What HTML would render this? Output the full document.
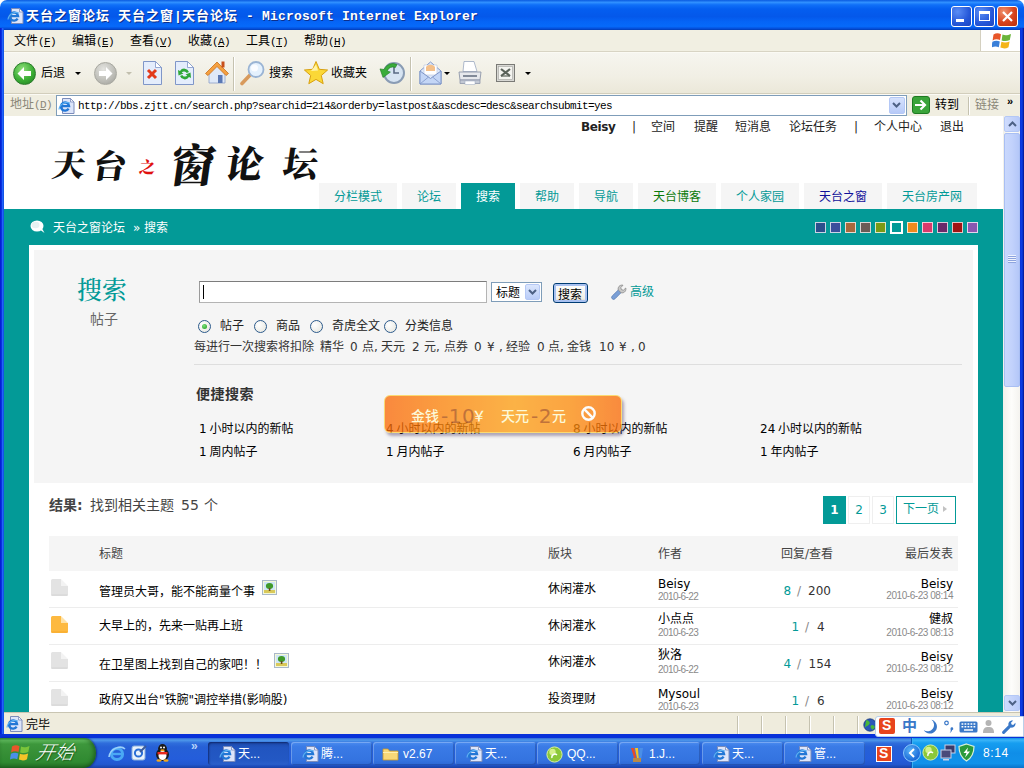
<!DOCTYPE html>
<html lang="zh-CN">
<head>
<meta charset="utf-8">
<title>天台之窗论坛 天台之窗|天台论坛 - Microsoft Internet Explorer</title>
<style>
*{box-sizing:border-box;margin:0;padding:0}
html,body{width:1024px;height:768px;overflow:hidden;background:#fff}
body{font-family:"Liberation Sans","Noto Sans CJK SC",sans-serif;font-size:12px;color:#000}
.abs,#win div,#win span,#win svg,#win i,#win b{position:absolute}
#win{position:relative;width:1024px;height:768px;overflow:hidden;background:#3f7f6f}
#win span.t{white-space:nowrap;line-height:1}
/* ---------- window chrome ---------- */
.ui{font-family:"Liberation Sans","Noto Sans CJK SC",sans-serif;font-size:12px;line-height:16px;height:16px;white-space:nowrap;color:#000}
.mono{font-family:"Liberation Mono","Noto Sans CJK SC",monospace}
#titlebar{left:0;top:0;width:1024px;height:30px;border-radius:7px 7px 0 0;background:linear-gradient(#0a5ae0 0,#3090ff 8%,#1070f8 16%,#045ef0 30%,#0458ea 55%,#0564f6 72%,#066afa 88%,#0450dc 95%,#023cb4 100%)}
#titlebar .tt{left:26px;top:9px;font-size:13px;font-weight:bold;color:#fff;letter-spacing:.2px;text-shadow:1px 1px 0 #0c2f8c;font-family:"Liberation Mono","Noto Sans CJK SC",monospace}
#titlebar .tt i{position:static;font-style:normal;letter-spacing:1px}
.wb{top:6px;width:21px;height:21px;border:1px solid #fff;border-radius:3px;background:radial-gradient(circle at 30% 25%,#5a8df5,#2557d8 60%,#1c45c0)}
#menubar{left:4px;top:30px;width:1016px;height:22px;background:#f1efe2;border-bottom:1px solid #d8d4c4}
#toolbar{left:4px;top:52px;width:1016px;height:42px;background:linear-gradient(#f6f5ef,#f1efe4 60%,#ebe8d9);border-top:1px solid #fbfaf4;border-bottom:1px solid #d2cebc}
#addrbar{left:4px;top:94px;width:1016px;height:22px;background:#f0eee1;border-top:1px solid #fbfaf4}
#lborder{left:0;top:28px;width:4px;height:740px;background:linear-gradient(90deg,#0019cf 0,#0a34e0 40%,#2466ff 65%,#0a4cd8 100%)}
#rborder{left:1020px;top:28px;width:4px;height:740px;background:linear-gradient(90deg,#0831d9,#0a3ee6 50%,#00138c)}
#status{left:4px;top:712px;width:1016px;height:22px;background:#efecdd;border-top:1px solid #c9c5b2}
#bborder{left:0;top:734px;width:1024px;height:4px;background:#0831d9}
#taskbar{left:0;top:738px;width:1024px;height:30px;background:linear-gradient(#3168d5 0,#4e98ea 7%,#2f6ddc 17%,#2660d6 30%,#245ddb 70%,#2258cf 88%,#1941a5 100%)}
#vscroll{left:1003px;top:116px;width:17px;height:596px;background:linear-gradient(90deg,#f1f0ea,#fdfdfb 50%,#f4f3ef)}
.sbtn{left:1px;width:16px;height:16px;border:1px solid #b4c8f6;border-radius:2px;background:linear-gradient(90deg,#cfdcfd,#b9cbf9)}
.sep{width:1px;background:#c5c2b0;border-right:1px solid #fff;box-sizing:content-box}
.tk{top:4px;height:23px;border-radius:3px;background:linear-gradient(#4b8cf0,#3a7be6 20%,#3473e0 80%,#2c67d4);box-shadow:inset 1px 1px 0 rgba(255,255,255,.25),inset -1px -1px 0 rgba(0,0,40,.2)}
.tk .ui{color:#fff;left:27px;top:4px;font-size:12px}
/* ---------- page ---------- */
#page{left:0;top:0;width:1024px;height:768px;overflow:hidden;background:#fff}
#page .t{margin-top:3px;font-family:"DejaVu Sans","Liberation Sans","Noto Sans CJK SC",sans-serif;font-size:12px;line-height:16px;height:16px;white-space:nowrap;color:#000}
#page .t.r{text-align:right}
#page .t.dt.r{letter-spacing:-.45px}
#page .t.c{text-align:center}
#teal{left:4px;top:209px;width:999px;height:520px;background:#039a97}
#box{left:29px;top:245px;width:949px;height:480px;background:#fff}
#sbox{left:5px;top:5px;width:939px;height:233px;background:#f5f5f5}
.tab{top:183px;height:26px;background:#f5f5f5;color:#039a97;font-size:12px;line-height:28px;text-align:center;white-space:nowrap;font-family:"Liberation Sans","Noto Sans CJK SC",sans-serif}
.tab.on{background:#039a97;color:#fff;height:27px}
.sw{top:222px;width:11px;height:11px;border:1px solid rgba(255,255,255,.75)}
.teal{color:#039a97 !important}
.g4{color:#444 !important}
.g6{color:#666 !important}
.dt{font-family:"Liberation Sans",sans-serif !important;font-size:10px !important;letter-spacing:-.6px;color:#8a8a8a !important}
.hl{height:1px;background:#ededed;left:49px;width:909px}
.pg{top:496px;height:28px;line-height:26px;text-align:center;font-size:12px;font-family:"DejaVu Sans","Liberation Sans","Noto Sans CJK SC",sans-serif;color:#039a97;border:1px solid #efefef;background:#fff}
</style>
</head>
<body>
<div id="win">
  <div id="page">
    <span class="t " style="color:#222;top:117.5px;left:581px;"><b style="position:static;letter-spacing:-.4px">Beisy</b></span>
    <span class="t " style="color:#222;top:117.5px;left:632px;">|</span>
    <span class="t " style="color:#222;top:117.5px;left:651px;">空间</span>
    <span class="t " style="color:#222;top:117.5px;left:694px;">提醒</span>
    <span class="t " style="color:#222;top:117.5px;left:735px;">短消息</span>
    <span class="t " style="color:#222;top:117.5px;left:789px;">论坛任务</span>
    <span class="t " style="color:#222;top:117.5px;left:854px;">|</span>
    <span class="t " style="color:#222;top:117.5px;left:874px;">个人中心</span>
    <span class="t " style="color:#222;top:117.5px;left:940px;">退出</span>
    <svg id="logo" style="left:44px;top:134px" width="290" height="60" viewBox="0 0 290 60">
      <g font-family="'Noto Serif CJK SC','Liberation Serif',serif" font-weight="900" fill="#111" transform="skewX(-8)">
        <text x="13" y="42" font-size="33">天</text>
        <text x="54" y="44" font-size="33">台</text>
        <text x="100" y="39" font-size="16" fill="#e01010">之</text>
        <text x="131" y="48" font-size="45">窗</text>
        <text x="186" y="44" font-size="38">论</text>
        <text x="243" y="43" font-size="35">坛</text>
      </g>
    </svg>
    <div class="tab" style="left:319px;width:78px;">分栏模式</div>
    <div class="tab" style="left:402px;width:54px;">论坛</div>
    <div class="tab on" style="left:461px;width:54px;">搜索</div>
    <div class="tab" style="left:520px;width:54px;">帮助</div>
    <div class="tab" style="left:579px;width:54px;">导航</div>
    <div class="tab" style="left:638px;width:78px;color:#0a7a0a">天台博客</div>
    <div class="tab" style="left:721px;width:78px;">个人家园</div>
    <div class="tab" style="left:804px;width:78px;color:#10109a">天台之窗</div>
    <div class="tab" style="left:887px;width:90px;">天台房产网</div>
    <div id="teal"></div>
    <svg style="left:29px;top:218px" width="18" height="17" viewBox="0 0 18 17"><ellipse cx="8" cy="8" rx="6.5" ry="5.5" fill="#fff"/><path d="M10 11 L15.5 15 L12.5 9.5Z" fill="#fff"/><ellipse cx="6.5" cy="7" rx="4" ry="3.2" fill="#e6f2f2"/></svg>
    <span class="t " style="top:218.5px;left:53px;color:#fff;">天台之窗论坛</span>
    <span class="t " style="top:218.5px;left:133px;color:#fff;">»</span>
    <span class="t " style="top:218.5px;left:144px;color:#fff;">搜索</span>
    <div class="sw" style="left:815px;background:#2b4f8c"></div>
    <div class="sw" style="left:830px;background:#3a4f9c"></div>
    <div class="sw" style="left:845px;background:#a8683c"></div>
    <div class="sw" style="left:860px;background:#6b5c56"></div>
    <div class="sw" style="left:875px;background:#7a9a14"></div>
    <div class="sw" style="left:890px;top:221px;width:13px;height:13px;border:2px solid #fff;background:#039a97"></div>
    <div class="sw" style="left:907px;background:#f08a1c"></div>
    <div class="sw" style="left:922px;background:#d83a6c"></div>
    <div class="sw" style="left:937px;background:#6a2a6a"></div>
    <div class="sw" style="left:952px;background:#a01414"></div>
    <div class="sw" style="left:967px;background:#8a58b0"></div>
    <div id="box"><div id="sbox"></div></div>
    <span class="t" style="left:77px;top:270px;height:36px;line-height:36px;font-size:25px;font-weight:500;color:#039a97;font-family:'Liberation Serif','Noto Serif CJK SC',serif">搜索</span>
    <span class="t " style="top:308.5px;left:90px;font-size:14px;color:#666;">帖子</span>
    <div style="left:199px;top:281px;width:288px;height:22px;background:#fff;border:1px solid #b4b4b4;border-top-color:#7c7c7c;border-left-color:#9a9a9a"><i style="left:3px;top:3px;width:1px;height:14px;background:#000"></i></div>
    <div style="left:491px;top:282px;width:51px;height:20px;background:#fff;border:1px solid #7f9db9"><span class="t" style="left:4px;top:1px">标题</span><div style="left:33px;top:1px;width:15px;height:16px;border-radius:2px;background:linear-gradient(#dbe6fd,#b9ccf8);border:1px solid #b5c8f5"><svg style="left:2px;top:4px" width="9" height="6" viewBox="0 0 9 6"><path d="M1 1 L4.5 4.5 L8 1" stroke="#4d6185" stroke-width="2" fill="none"/></svg></div></div>
    <div style="left:553px;top:283px;width:35px;height:20px;border:1px solid #003c74;border-radius:3px;background:linear-gradient(#fff,#f0efe6 80%,#d6d0c5);box-shadow:inset 0 0 0 2px #a9c1f0"><span class="t" style="left:4px;top:2px">搜索</span></div>
    <svg style="left:610px;top:283px" width="18" height="18" viewBox="0 0 18 18"><path d="M2.2 15.8 a2 2 0 0 1 0-2.8 L8.5 6.8 L11.2 9.5 L5 15.8 a2 2 0 0 1-2.8 0z" fill="#7a9fd6" stroke="#5c7fb5" stroke-width=".8"/><path d="M8.3 7 C7.5 4.5 9.5 1.5 13 2.2 L10.8 4.6 L11.4 6.6 L13.4 7.2 L15.8 5 C16.5 8.5 13.5 10.5 11 9.7z" fill="#c9c9c9" stroke="#8a8a8a" stroke-width=".8"/></svg>
    <span class="t teal" style="top:283px;left:630px;">高级</span>
    <div style="left:198px;top:320px;width:13px;height:13px;border-radius:50%;border:1px solid #2c5a8c;background:radial-gradient(circle at 35% 35%,#fff,#e4e4dc)"><i style="left:3px;top:3px;width:5px;height:5px;border-radius:50%;background:radial-gradient(circle at 40% 35%,#7be07b,#1a9a1a)"></i></div>
    <span class="t " style="top:316.5px;left:220px;color:#222;">帖子</span>
    <div style="left:254px;top:320px;width:13px;height:13px;border-radius:50%;border:1px solid #2c5a8c;background:radial-gradient(circle at 35% 35%,#fff,#e4e4dc)"></div>
    <span class="t " style="top:316.5px;left:276px;color:#222;">商品</span>
    <div style="left:310px;top:320px;width:13px;height:13px;border-radius:50%;border:1px solid #2c5a8c;background:radial-gradient(circle at 35% 35%,#fff,#e4e4dc)"></div>
    <span class="t " style="top:316.5px;left:332px;color:#222;">奇虎全文</span>
    <div style="left:384px;top:320px;width:13px;height:13px;border-radius:50%;border:1px solid #2c5a8c;background:radial-gradient(circle at 35% 35%,#fff,#e4e4dc)"></div>
    <span class="t " style="top:316.5px;left:405px;color:#222;">分类信息</span>
    <span class="t " style="top:338px;left:194px;color:#333;">每进行一次搜索将扣除</span>
    <span class="t " style="top:338px;left:320px;color:#333;">精华</span>
    <span class="t " style="top:338px;left:350px;color:#333;">0</span>
    <span class="t " style="top:338px;left:362px;color:#333;">点,</span>
    <span class="t " style="top:338px;left:381px;color:#333;">天元</span>
    <span class="t " style="top:338px;left:412px;color:#333;">2</span>
    <span class="t " style="top:338px;left:424px;color:#333;">元,</span>
    <span class="t " style="top:338px;left:444px;color:#333;">点券</span>
    <span class="t " style="top:338px;left:474px;color:#333;">0</span>
    <span class="t " style="top:338px;left:487px;color:#333;">¥</span>
    <span class="t " style="top:338px;left:499px;color:#333;">,</span>
    <span class="t " style="top:338px;left:506px;color:#333;">经验</span>
    <span class="t " style="top:338px;left:537px;color:#333;">0</span>
    <span class="t " style="top:338px;left:548px;color:#333;">点,</span>
    <span class="t " style="top:338px;left:567px;color:#333;">金钱</span>
    <span class="t " style="top:338px;left:599px;color:#333;">10</span>
    <span class="t " style="top:338px;left:619px;color:#333;">¥</span>
    <span class="t " style="top:338px;left:631px;color:#333;">,</span>
    <span class="t " style="top:338px;left:638px;color:#333;">0</span>
    <div style="left:194px;top:364px;width:768px;height:1px;background:#dedede"></div>
    <span class="t " style="top:383.5px;left:196px;letter-spacing:.5px;font-size:14px;font-weight:bold;color:#333;">便捷搜索</span>
    <span class="t " style="top:419.5px;left:199px;word-spacing:-1px;">1 小时以内的新帖</span>
    <span class="t " style="top:419.5px;left:386px;word-spacing:-1px;">4 小时以内的新帖</span>
    <span class="t " style="top:419.5px;left:573px;word-spacing:-1px;">8 小时以内的新帖</span>
    <span class="t " style="top:419.5px;left:760px;word-spacing:-1px;">24 小时以内的新帖</span>
    <span class="t " style="top:442.5px;left:199px;word-spacing:-1px;">1 周内帖子</span>
    <span class="t " style="top:442.5px;left:386px;word-spacing:-1px;">1 月内帖子</span>
    <span class="t " style="top:442.5px;left:573px;word-spacing:-1px;">6 月内帖子</span>
    <span class="t " style="top:442.5px;left:760px;word-spacing:-1px;">1 年内帖子</span>
    <div id="pop" style="left:384px;top:395px;width:238px;height:38px;border-radius:6px;border:1px solid #fdd24a;background:linear-gradient(90deg,#fb6805 0,#fd8408 25%,#fe9e10 55%,#fd8a0a 80%,#fb6a05 100%);opacity:.76;box-shadow:2px 3px 3px rgba(60,40,90,.5)">
      <span class="t" style="left:26px;top:9.5px;font-size:14px;font-weight:500;color:#fffbd0">金钱</span><span class="t" style="left:56px;top:7px;font-size:20px;letter-spacing:.5px;color:#b04a00">-10</span><span class="t" style="left:87px;top:9.5px;font-size:14px;font-weight:500;color:#fffbd0">￥</span>
      <span class="t" style="left:116px;top:9.5px;font-size:14px;font-weight:500;color:#fffbd0">天元</span><span class="t" style="left:146px;top:7px;font-size:20px;letter-spacing:.5px;color:#b04a00">-2</span><span class="t" style="left:167px;top:9.5px;font-size:14px;font-weight:500;color:#fffbd0">元</span>
      <svg style="left:195px;top:9px" width="17" height="17" viewBox="0 0 17 17"><circle cx="8.5" cy="8.5" r="6.2" fill="none" stroke="#fff" stroke-width="2.4"/><path d="M4.2 4.2 L12.8 12.8" stroke="#fff" stroke-width="2.4"/></svg>
    </div>
    <span class="t " style="top:495px;left:49px;font-size:14px;font-weight:bold;color:#444;">结果:</span>
    <span class="t " style="top:495px;left:90px;font-size:14px;color:#444;">找到相关主题</span>
    <span class="t " style="top:495px;left:181px;font-size:14px;color:#444;">55</span>
    <span class="t " style="top:495px;left:204px;font-size:14px;color:#444;">个</span>
    <div class="pg" style="left:823px;width:23px;background:#039a97;border-color:#039a97;color:#fff;font-weight:bold">1</div>
    <div class="pg" style="left:848px;width:22px">2</div>
    <div class="pg" style="left:872px;width:22px">3</div>
    <div class="pg" style="left:896px;width:60px;border-color:#039a97;text-align:left;padding-left:6px;line-height:24px">下一页<i style="left:46px;top:9px;width:0;height:0;border-left:4px solid #c2c2c2;border-top:3.5px solid transparent;border-bottom:3.5px solid transparent"></i></div>
    <div style="left:49px;top:536px;width:909px;height:35px;background:#f5f5f5"></div>
    <span class="t g4" style="top:545px;left:99px;">标题</span>
    <span class="t g4" style="top:545px;left:548px;">版块</span>
    <span class="t g4" style="top:545px;left:658px;">作者</span>
    <span class="t g4" style="top:545px;left:781px;">回复/查看</span>
    <span class="t g4 r" style="top:545px;left:653px;width:300px;">最后发表</span>
    <div class="hl" style="top:607px"></div>
    <div class="hl" style="top:644px"></div>
    <div class="hl" style="top:681px"></div>
    <svg style="left:51px;top:579px" width="17" height="17" viewBox="0 0 17 17"><path d="M0 1.5 a1.5 1.5 0 0 1 1.5-1.5 h8.5 v7 h7 v8.5 a1.5 1.5 0 0 1-1.5 1.5 h-14 a1.5 1.5 0 0 1-1.5-1.5z" fill="#e3e3e3"/><path d="M10 0 L17 7 h-7z" fill="#f3f3f3"/><path d="M.5 16 h16" stroke="#d4d4d4" stroke-width="1"/></svg>
    <span class="t " style="top:582.5px;left:99px;">管理员大哥，能不能商量个事</span>
    <svg style="left:262px;top:580px" width="15" height="15" viewBox="0 0 15 15"><rect x=".5" y=".5" width="14" height="14" fill="#f4f8d8" stroke="#a9b8c9"/><rect x="2" y="2" width="11" height="11" fill="#cfe6f7"/><rect x="2" y="10" width="11" height="3" fill="#d9c95a"/><ellipse cx="7.5" cy="6" rx="3.6" ry="3" fill="#3f9a2a"/><rect x="6.8" y="8" width="1.6" height="3" fill="#6a4a1a"/></svg>
    <span class="t " style="top:580px;left:548px;">休闲灌水</span>
    <span class="t " style="top:575px;left:658px;">Beisy</span>
    <span class="t dt" style="top:588.5px;left:658px;">2010-6-22</span>
    <span class="t teal" style="top:581.5px;left:783.5px;">8</span>
    <span class="t " style="top:581.5px;left:797px;color:#888;">/</span>
    <span class="t " style="top:581.5px;left:808px;color:#333;">200</span>
    <span class="t r" style="top:575px;left:653px;width:300px;">Beisy</span>
    <span class="t dt r" style="top:588px;left:653px;width:300px;">2010-6-23 08:14</span>
    <svg style="left:51px;top:616px" width="17" height="17" viewBox="0 0 17 17"><path d="M0 1.5 a1.5 1.5 0 0 1 1.5-1.5 h8.5 v7 h7 v8.5 a1.5 1.5 0 0 1-1.5 1.5 h-14 a1.5 1.5 0 0 1-1.5-1.5z" fill="#fdb940"/><path d="M10 0 L17 7 h-7z" fill="#ffe2a6"/><path d="M.5 16 h16" stroke="#f7a928" stroke-width="1"/></svg>
    <span class="t " style="top:617px;left:99px;">大早上的，先来一贴再上班</span>
    <span class="t " style="top:617px;left:548px;">休闲灌水</span>
    <span class="t " style="top:610px;left:658px;">小点点</span>
    <span class="t dt" style="top:625px;left:658px;">2010-6-23</span>
    <span class="t teal" style="top:618px;left:791.5px;">1</span>
    <span class="t " style="top:618px;left:805px;color:#888;">/</span>
    <span class="t " style="top:618px;left:817px;color:#333;">4</span>
    <span class="t r" style="top:610px;left:653px;width:300px;">健叔</span>
    <span class="t dt r" style="top:624.5px;left:653px;width:300px;">2010-6-23 08:13</span>
    <svg style="left:51px;top:652px" width="17" height="17" viewBox="0 0 17 17"><path d="M0 1.5 a1.5 1.5 0 0 1 1.5-1.5 h8.5 v7 h7 v8.5 a1.5 1.5 0 0 1-1.5 1.5 h-14 a1.5 1.5 0 0 1-1.5-1.5z" fill="#e3e3e3"/><path d="M10 0 L17 7 h-7z" fill="#f3f3f3"/><path d="M.5 16 h16" stroke="#d4d4d4" stroke-width="1"/></svg>
    <span class="t " style="top:655.5px;left:99px;">在卫星图上找到自己的家吧！！</span>
    <svg style="left:274px;top:653px" width="15" height="15" viewBox="0 0 15 15"><rect x=".5" y=".5" width="14" height="14" fill="#f4f8d8" stroke="#a9b8c9"/><rect x="2" y="2" width="11" height="11" fill="#cfe6f7"/><rect x="2" y="10" width="11" height="3" fill="#d9c95a"/><ellipse cx="7.5" cy="6" rx="3.6" ry="3" fill="#3f9a2a"/><rect x="6.8" y="8" width="1.6" height="3" fill="#6a4a1a"/></svg>
    <span class="t " style="top:652.5px;left:548px;">休闲灌水</span>
    <span class="t " style="top:646px;left:658px;">狄洛</span>
    <span class="t dt" style="top:661.5px;left:658px;">2010-6-22</span>
    <span class="t teal" style="top:654.5px;left:783.5px;">4</span>
    <span class="t " style="top:654.5px;left:797px;color:#888;">/</span>
    <span class="t " style="top:654.5px;left:808.5px;color:#333;">154</span>
    <span class="t r" style="top:648px;left:653px;width:300px;">Beisy</span>
    <span class="t dt r" style="top:660.5px;left:653px;width:300px;">2010-6-23 08:12</span>
    <svg style="left:51px;top:689px" width="17" height="17" viewBox="0 0 17 17"><path d="M0 1.5 a1.5 1.5 0 0 1 1.5-1.5 h8.5 v7 h7 v8.5 a1.5 1.5 0 0 1-1.5 1.5 h-14 a1.5 1.5 0 0 1-1.5-1.5z" fill="#e3e3e3"/><path d="M10 0 L17 7 h-7z" fill="#f3f3f3"/><path d="M.5 16 h16" stroke="#d4d4d4" stroke-width="1"/></svg>
    <span class="t " style="top:690.5px;left:99px;">政府又出台"铁腕"调控举措(影响股)</span>
    <span class="t " style="top:689.5px;left:548px;">投资理财</span>
    <span class="t " style="top:685px;left:658px;">Mysoul</span>
    <span class="t dt" style="top:698.5px;left:658px;">2010-6-23</span>
    <span class="t teal" style="top:691.5px;left:791.5px;">1</span>
    <span class="t " style="top:691.5px;left:805px;color:#888;">/</span>
    <span class="t " style="top:691.5px;left:817px;color:#333;">6</span>
    <span class="t r" style="top:685px;left:653px;width:300px;">Beisy</span>
    <span class="t dt r" style="top:697.5px;left:653px;width:300px;">2010-6-23 08:12</span>
  </div>
  <div id="vscroll">
    <div class="sbtn" style="top:0"><svg style="left:3px;top:4px" width="9" height="6" viewBox="0 0 9 6"><path d="M1 5 L4.5 1.5 L8 5" stroke="#4d6185" stroke-width="2" fill="none"/></svg></div>
    <div style="left:1px;top:17px;width:16px;height:254px;border:1px solid #a9bff3;border-radius:2px;background:linear-gradient(90deg,#c9d8fd,#c2d2fc 50%,#b4c7f8)"><svg style="left:3px;top:121px" width="8" height="9" viewBox="0 0 8 9"><path d="M0 .5h8M0 2.5h8M0 4.5h8M0 6.5h8" stroke="#eef3ff" stroke-width="1"/><path d="M0 1.5h8M0 3.5h8M0 5.5h8M0 7.5h8" stroke="#8ea4de" stroke-width="1"/></svg></div>
    <div class="sbtn" style="top:579px"><svg style="left:3px;top:4px" width="9" height="6" viewBox="0 0 9 6"><path d="M1 1 L4.5 4.5 L8 1" stroke="#4d6185" stroke-width="2" fill="none"/></svg></div>
  </div>
  <div id="titlebar"><svg style="left:7px;top:8px" width="17" height="16" viewBox="0 0 17 16"><path d="M4.5 .5 h8 l3.5 3.5 v11.5 h-11.5z" fill="#dde5fa" stroke="#7b8cba" stroke-width="1"/><path d="M12.5 .5 v3.5 h3.5z" fill="#f6f8ff" stroke="#7b8cba" stroke-width=".8"/><path d="M10.6 10.6 a4.1 4.1 0 1 1 .5-2.4 h-7" fill="none" stroke="#2277d6" stroke-width="2.3"/><path d="M1 11.5 C1.5 6 8 3 12 5.2" fill="none" stroke="#5db0f2" stroke-width="1.2"/></svg><span class="ui tt"><i>天台之窗论坛</i> <i>天台之窗</i>|<i>天台论坛</i> - Microsoft Internet Explorer</span>
    <div class="wb" style="left:951px"><i style="left:4px;top:12px;width:8px;height:3px;background:#fff"></i></div>
    <div class="wb" style="left:974px"><i style="left:4px;top:4px;width:11px;height:10px;border:1px solid #fff;border-top-width:3px"></i></div>
    <div class="wb" style="left:997px;background:radial-gradient(circle at 30% 25%,#f0906c,#d8421c 55%,#b8300c)"><svg style="left:3px;top:3px" width="13" height="13" viewBox="0 0 13 13"><path d="M2 2 L11 11 M11 2 L2 11" stroke="#fff" stroke-width="2.2"/></svg></div>
  </div>
  <div id="menubar">
    <span class="ui" style="left:10px;top:3px">文件<span class="mono" style="position:static;font-size:11px;letter-spacing:-.6px">(<u>F</u>)</span></span>
    <span class="ui" style="left:68px;top:3px">编辑<span class="mono" style="position:static;font-size:11px;letter-spacing:-.6px">(<u>E</u>)</span></span>
    <span class="ui" style="left:126px;top:3px">查看<span class="mono" style="position:static;font-size:11px;letter-spacing:-.6px">(<u>V</u>)</span></span>
    <span class="ui" style="left:184px;top:3px">收藏<span class="mono" style="position:static;font-size:11px;letter-spacing:-.6px">(<u>A</u>)</span></span>
    <span class="ui" style="left:242px;top:3px">工具<span class="mono" style="position:static;font-size:11px;letter-spacing:-.6px">(<u>T</u>)</span></span>
    <span class="ui" style="left:300px;top:3px">帮助<span class="mono" style="position:static;font-size:11px;letter-spacing:-.6px">(<u>H</u>)</span></span>
    <div style="left:976px;top:0;width:40px;height:21px;background:#fff;border-left:1px solid #d4d0c0"><svg style="left:11px;top:1px" width="20" height="19" viewBox="0 0 20 19"><path d="M1.5 3.5 C4 2 6.5 2 9 3.2 L8 9 C5.5 8 3 8 .6 9.4z" fill="#e8562a"/><path d="M10.5 3.6 C13 4.8 15.5 4.6 19 3 L17.8 9 C15 10.4 12.4 10.4 9.6 9.4z" fill="#6ab43a"/><path d="M.4 10.8 C3 9.4 5.4 9.4 7.8 10.4 L6.8 16.2 C4.4 15.2 2 15.2 -.6 16.6z" fill="#3a7fd8"/><path d="M9.4 10.8 C12 11.8 14.6 11.8 17.6 10.4 L16.5 16.2 C13.8 17.8 11.2 17.6 8.4 16.6z" fill="#f4b418"/></svg></div>
  </div>
  <div id="toolbar">
    <div style="left:9px;top:9px;width:23px;height:23px;border-radius:50%;border:1px solid #2a7a2a;background:radial-gradient(circle at 40% 30%,#8fe07a 0,#3cae35 55%,#1e7a22 100%)"><svg style="left:-1px;top:-1px" width="23" height="23" viewBox="1 1 23 23"><path d="M5.5 12.5 L12 6 v4 h7 v5 h-7 v4z" fill="#fff"/></svg></div>
    <span class="ui" style="left:37px;top:12px">后退</span>
    <i style="left:71px;top:19px;border-top:3px solid #000;border-left:3px solid transparent;border-right:3px solid transparent"></i>
    <div style="left:90px;top:9px;width:23px;height:23px;border-radius:50%;border:1px solid #a8a8a0;background:radial-gradient(circle at 40% 30%,#e4e4e0 0,#bcbcb6 60%,#9c9c96 100%)"><svg style="left:-1px;top:-1px" width="23" height="23" viewBox="1 1 23 23"><path d="M19.5 12.5 L13 6 v4 h-7 v5 h7 v4z" fill="#fff"/></svg></div>
    <i style="left:122px;top:19px;border-top:3px solid #c2bfae;border-left:3px solid transparent;border-right:3px solid transparent"></i>
    <svg style="left:138px;top:7px" width="21" height="26" viewBox="0 0 21 26"><path d="M1.5 1.5 h12 l6 6 v17 h-18z" fill="#e4edfc" stroke="#7f96c8"/><path d="M13.5 1.5 v6 h6z" fill="#fff" stroke="#7f96c8" stroke-width=".8"/><path d="M6 10 L14 18 M14 10 L6 18" stroke="#e23a1c" stroke-width="3"/></svg>
    <svg style="left:170px;top:7px" width="21" height="26" viewBox="0 0 21 26"><path d="M1.5 1.5 h12 l6 6 v17 h-18z" fill="#e4edfc" stroke="#7f96c8"/><path d="M13.5 1.5 v6 h6z" fill="#fff" stroke="#7f96c8" stroke-width=".8"/><path d="M15 12 a5 5 0 0 0-9-1 l-2-1 l.5 5.5 l5-2 l-1.8-1 a3 3 0 0 1 5 .6z" fill="#2fa838"/><path d="M6 16 a5 5 0 0 0 9 1 l2 1 l-.5-5.5 l-5 2 l1.8 1 a3 3 0 0 1-5-.6z" fill="#2fa838"/></svg>
    <svg style="left:200px;top:6px" width="26" height="27" viewBox="0 0 26 27"><path d="M5 13 v11 h16 v-11 l-8-8z" fill="#dfe9f8" stroke="#8aa0c8" stroke-width=".8"/><rect x="14" y="16" width="4.5" height="8" fill="#5a78b4"/><path d="M1.5 14.5 L13 3 L24.5 14.5 L22 16.5 L13 7.5 L4 16.5z" fill="#f5a040" stroke="#c8701c" stroke-width=".8"/><rect x="17.5" y="2.5" width="3" height="6" fill="#c8501c"/></svg>
    <div class="sep" style="left:229px;top:4px;height:34px"></div>
    <svg style="left:236px;top:7px" width="26" height="26" viewBox="0 0 26 26"><path d="M2 23.5 L11 14" stroke="#d89a5c" stroke-width="3.6" stroke-linecap="round"/><circle cx="16" cy="9.5" r="7.5" fill="#e4f1fd" stroke="#9ab4d4" stroke-width="1.8"/><circle cx="14.5" cy="8" r="3.5" fill="#fff" opacity=".8"/></svg>
    <span class="ui" style="left:265px;top:12px">搜索</span>
    <svg style="left:299px;top:7px" width="26" height="25" viewBox="0 0 26 25"><path d="M13 1.5 L16.3 9.3 L24.6 10 L18.3 15.5 L20.2 23.7 L13 19.4 L5.8 23.7 L7.7 15.5 L1.4 10 L9.7 9.3z" fill="#fbd837" stroke="#d8a010" stroke-width="1"/><path d="M13 4.5 L15 10.5 L8 11z" fill="#fff3a8"/></svg>
    <span class="ui" style="left:327px;top:12px">收藏夹</span>
    <svg style="left:375px;top:7px" width="27" height="26" viewBox="0 0 27 26"><circle cx="15" cy="13" r="10" fill="#d7e4f2" stroke="#8a9cb4" stroke-width="2"/><path d="M15 6.5 v6.5 h5" stroke="#5a6a84" stroke-width="1.6" fill="none"/><path d="M5 9.5 a9.5 9.5 0 0 1 13-5 l-1.6 3 a6 6 0 0 0-8.2 3.4 l3.2 1.2 l-7.4 5.4 l-3-8.6z" fill="#3aac3a" stroke="#1e7a22" stroke-width=".6"/></svg>
    <div class="sep" style="left:406px;top:4px;height:34px"></div>
    <svg style="left:414px;top:7px" width="25" height="26" viewBox="0 0 25 26"><path d="M2 11 L12.5 2 L23 11 v13 h-21z" fill="#dfe9f9" stroke="#7f96c8" stroke-width="1"/><path d="M6 5 h13 v10 h-13z" fill="#fff" stroke="#b8c4dc" stroke-width=".6"/><path d="M8 7 C10 4 15 4 17 7 v4 h-9z" fill="#f4c08a"/><path d="M2 11 L12.5 18.5 L23 11 v13 h-21z" fill="#c4d6f6" stroke="#7f96c8" stroke-width="1"/><path d="M2 24 L10.5 17 M23 24 L14.5 17" stroke="#7f96c8" stroke-width=".8"/></svg>
    <i style="left:440px;top:19px;border-top:3px solid #000;border-left:3px solid transparent;border-right:3px solid transparent"></i>
    <svg style="left:453px;top:7px" width="26" height="26" viewBox="0 0 26 26"><path d="M7 1.5 h10 l3 10 h-14z" fill="#fff" stroke="#9aa8c0" stroke-width=".8"/><path d="M2 12 h22 l-1 8 h-20z" fill="#e6e8ec" stroke="#8e96a8" stroke-width=".9"/><path d="M3 20 h20 v3.5 h-20z" fill="#c2c8d4" stroke="#8e96a8" stroke-width=".8"/><path d="M6 16 h14" stroke="#6a7284" stroke-width="1.6"/><rect x="8" y="21" width="10" height="3.5" fill="#fff" stroke="#9aa8c0" stroke-width=".5"/></svg>
    <svg style="left:492px;top:11px" width="19" height="18" viewBox="0 0 19 18"><rect x=".5" y=".5" width="18" height="17" fill="#d8d8d4" stroke="#7a7a76"/><rect x="2.5" y="2.5" width="14" height="13" fill="#f4f4f0" stroke="#a4a4a0" stroke-width=".6"/><path d="M5 5 L14 12 M14 5 L5 12" stroke="#5a625a" stroke-width="2.2"/><path d="M5 12 h9" stroke="#5a625a" stroke-width="1.2"/></svg>
    <i style="left:521px;top:19px;border-top:3px solid #000;border-left:3px solid transparent;border-right:3px solid transparent"></i>
  </div>
  <div id="addrbar">
    <span class="ui" style="left:6px;top:1px;color:#8a8778">地址<span class="mono" style="position:static;font-size:11px;letter-spacing:-.6px">(<u>D</u>)</span></span>
    <div style="left:52px;top:0px;width:851px;height:21px;background:#fff;border:1px solid #7f9db9"><svg style="left:1px;top:2px" width="17" height="16" viewBox="0 0 17 16"><path d="M4.5 .5 h8 l3.5 3.5 v11.5 h-11.5z" fill="#dde5fa" stroke="#7b8cba" stroke-width="1"/><path d="M12.5 .5 v3.5 h3.5z" fill="#f6f8ff" stroke="#7b8cba" stroke-width=".8"/><path d="M10.6 10.6 a4.1 4.1 0 1 1 .5-2.4 h-7" fill="none" stroke="#2277d6" stroke-width="2.3"/><path d="M1 11.5 C1.5 6 8 3 12 5.2" fill="none" stroke="#5db0f2" stroke-width="1.2"/></svg><span class="ui mono" style="left:21px;top:2px;font-size:11px;letter-spacing:-.6px">http://bbs.zjtt.cn/search.php?searchid=214&amp;orderby=lastpost&amp;ascdesc=desc&amp;searchsubmit=yes</span><div style="left:832px;top:1px;width:16px;height:17px;border-radius:2px;border:1px solid #b4c8f6;background:linear-gradient(#d6e2fd,#b7caf8)"><svg style="left:2px;top:4px" width="9" height="6" viewBox="0 0 9 6"><path d="M1 1 L4.5 4.5 L8 1" stroke="#4d6185" stroke-width="2" fill="none"/></svg></div></div>
    <svg style="left:908px;top:1px" width="18" height="18" viewBox="0 0 18 18"><rect x=".5" y=".5" width="17" height="17" rx="2.5" fill="#3aa43a" stroke="#1e7a22"/><path d="M3 9 h9 M8.5 4.5 L13 9 L8.5 13.5" stroke="#fff" stroke-width="2.2" fill="none"/></svg>
    <span class="ui" style="left:931px;top:2px">转到</span>
    <div class="sep" style="left:964px;top:2px;height:18px"></div>
    <span class="ui" style="left:971px;top:2px;color:#8a8778">链接</span>
    <span class="ui" style="left:1003px;top:-2px;font-weight:bold;font-size:11px">»</span>
  </div>
  <div id="status">
    <svg style="left:2px;top:3px" width="17" height="16" viewBox="0 0 17 16"><path d="M4.5 .5 h8 l3.5 3.5 v11.5 h-11.5z" fill="#dde5fa" stroke="#7b8cba" stroke-width="1"/><path d="M12.5 .5 v3.5 h3.5z" fill="#f6f8ff" stroke="#7b8cba" stroke-width=".8"/><path d="M10.6 10.6 a4.1 4.1 0 1 1 .5-2.4 h-7" fill="none" stroke="#2277d6" stroke-width="2.3"/><path d="M1 11.5 C1.5 6 8 3 12 5.2" fill="none" stroke="#5db0f2" stroke-width="1.2"/></svg>
    <span class="ui" style="left:22px;top:4px">完毕</span>
    <div class="sep" style="left:733px;top:3px;height:19px"></div>
    <div class="sep" style="left:757px;top:3px;height:19px"></div>
    <div class="sep" style="left:781px;top:3px;height:19px"></div>
    <div class="sep" style="left:805px;top:3px;height:19px"></div>
    <div class="sep" style="left:829px;top:3px;height:19px"></div>
    <div class="sep" style="left:853px;top:3px;height:19px"></div>
    <svg style="left:859px;top:5px" width="14" height="14" viewBox="0 0 14 14"><circle cx="7" cy="7" r="6.2" fill="#2a58b8" stroke="#1a3a7a" stroke-width=".8"/><path d="M3 3 C5 2 7 4 6 6 C5 8 3 7 2 9 M8 8 C10 7 12 8 11 10 C10 12 8 11 8 8z" fill="#4ab83a" stroke="#4ab83a"/></svg>
  </div>
  <div id="lborder"></div><div id="rborder"></div><div id="bborder"></div>
  <div id="ime" style="left:875px;top:716px;width:149px;height:21px;background:#fff;border:1px solid #b9d0ea;border-radius:3px 0 0 3px">
      <div style="left:3px;top:1px;width:16px;height:16px;background:#e8441c;border-radius:2px"><span class="ui" style="left:3px;top:-1px;color:#fff;font-weight:bold;font-size:14px">S</span></div>
      <span class="ui" style="left:26px;top:0;font-size:15px;font-weight:bold;color:#3a78c8;line-height:18px;height:18px">中</span>
      <svg style="left:47px;top:2px" width="14" height="15" viewBox="0 0 14 15"><path d="M8.5 .8 A7 7 0 1 1 .8 11 A6.2 6.2 0 0 0 8.5 .8z" fill="#3a78c8"/></svg>
      <svg style="left:68px;top:3px" width="10" height="14" viewBox="0 0 10 14"><circle cx="2.5" cy="3" r="1.8" fill="none" stroke="#3a78c8" stroke-width="1.2"/><path d="M6.5 8.5 a1.4 1.4 0 1 1 1.6 1.6 C8 11.5 7 12.6 5.6 13 C6.6 12 7 11 6.6 10z" fill="#3a78c8"/></svg>
      <svg style="left:83px;top:4px" width="19" height="12" viewBox="0 0 19 12"><rect x=".5" y=".5" width="18" height="11" rx="1.5" fill="#3a78c8"/><path d="M2.5 3 h14 M2.5 5.8 h14" stroke="#fff" stroke-width="1.5" stroke-dasharray="1.8 1.2"/><path d="M5 9 h9" stroke="#fff" stroke-width="1.5"/></svg>
      <svg style="left:106px;top:2px" width="13" height="15" viewBox="0 0 13 15"><circle cx="6.5" cy="4" r="3" fill="#b4b4b4"/><path d="M1 14 C1 9 3 8 6.5 8 C10 8 12 9 12 14z" fill="#b4b4b4"/></svg>
      <svg style="left:125px;top:2px" width="16" height="16" viewBox="0 0 16 16"><path d="M1.5 14.5 a1.6 1.6 0 0 1 0-2.2 L7.5 6.3 C6.8 3.5 9 1 12.2 1.6 L10 3.8 L10.6 5.4 L12.2 6 L14.4 3.8 C15 7 12.5 9.2 9.7 8.5 L3.7 14.5 a1.6 1.6 0 0 1-2.2 0z" fill="#3a78c8"/></svg>
    </div>
  <div id="taskbar">
    <div id="start" style="left:0;top:0;width:96px;height:30px;border-radius:0 12px 12px 0/0 15px 15px 0;background:linear-gradient(#3f9a3f 0,#5cb85a 8%,#3d973c 20%,#358e35 55%,#2f8a31 80%,#236f25 100%);box-shadow:inset -2px 0 4px rgba(0,40,0,.45),1px 0 2px rgba(0,0,60,.5)">
      <svg style="left:10px;top:5px" width="21" height="19" viewBox="0 0 20 19"><path d="M1.5 3.5 C4 2 6.5 2 9 3.2 L8 9 C5.5 8 3 8 .6 9.4z" fill="#e8562a"/><path d="M10.5 3.6 C13 4.8 15.5 4.6 19 3 L17.8 9 C15 10.4 12.4 10.4 9.6 9.4z" fill="#7ac43a"/><path d="M.4 10.8 C3 9.4 5.4 9.4 7.8 10.4 L6.8 16.2 C4.4 15.2 2 15.2 -.6 16.6z" fill="#4a8fe8"/><path d="M9.4 10.8 C12 11.8 14.6 11.8 17.6 10.4 L16.5 16.2 C13.8 17.8 11.2 17.6 8.4 16.6z" fill="#f4c428"/></svg>
      <span class="ui" style="left:36px;top:3px;height:24px;line-height:24px;font-size:19px;font-weight:300;font-style:italic;color:#fff;text-shadow:1px 1px 1px rgba(0,50,0,.6);transform:skewX(-12deg)">开始</span>
    </div>
    <svg style="left:108px;top:6px" width="18" height="18" viewBox="0 0 18 18"><circle cx="9" cy="10" r="5.6" fill="none" stroke="#4aa8f4" stroke-width="3"/><path d="M4 10 h10" stroke="#4aa8f4" stroke-width="2.4"/><path d="M9.5 10.5 h6 v4 h-6z" fill="#2a60d6" opacity="0"/><path d="M1 13 C2 4 13 1 17 5" stroke="#9ad0fa" stroke-width="1.6" fill="none"/></svg>
    <svg style="left:131px;top:6px" width="17" height="17" viewBox="0 0 17 17"><rect x="1" y="2" width="13" height="14" rx="2" fill="#e8f2fc" stroke="#8ab0dc"/><circle cx="7.5" cy="9" r="3.6" fill="none" stroke="#2a6fd6" stroke-width="2"/><path d="M9 8 L15 2" stroke="#3a5a9a" stroke-width="2"/></svg>
    <svg style="left:154px;top:5px" width="17" height="19" viewBox="0 0 17 19"><ellipse cx="8.5" cy="11.5" rx="6.5" ry="6.5" fill="#1a1a1a"/><ellipse cx="8.5" cy="5.5" rx="4.4" ry="4.4" fill="#1a1a1a"/><ellipse cx="8.5" cy="12.5" rx="4" ry="4.6" fill="#fff"/><path d="M3.5 9 h10 v2.4 h-10z" fill="#e8281c"/><ellipse cx="8.5" cy="7.2" rx="2.2" ry="1" fill="#f4a81c"/><ellipse cx="5" cy="17.5" rx="2.6" ry="1.2" fill="#f4a81c"/><ellipse cx="12" cy="17.5" rx="2.6" ry="1.2" fill="#f4a81c"/><circle cx="7" cy="4.6" r="1" fill="#fff"/><circle cx="10" cy="4.6" r="1" fill="#fff"/></svg>
    <span class="ui" style="left:191px;top:0px;color:#b8d4fa;font-size:12px;font-weight:bold">»</span>
    <div class="tk" style="left:208px;width:81px;background:linear-gradient(#1c4aaa,#2155c0 25%,#2358c4 80%,#2a60cc);box-shadow:inset 1px 1px 2px rgba(0,0,40,.5);"><svg style="left:11px;top:4px" width="17" height="16" viewBox="0 0 17 16"><path d="M4.5 .5 h8 l3.5 3.5 v11.5 h-11.5z" fill="#dde5fa" stroke="#7b8cba" stroke-width="1"/><path d="M12.5 .5 v3.5 h3.5z" fill="#f6f8ff" stroke="#7b8cba" stroke-width=".8"/><path d="M10.6 10.6 a4.1 4.1 0 1 1 .5-2.4 h-7" fill="none" stroke="#2277d6" stroke-width="2.3"/><path d="M1 11.5 C1.5 6 8 3 12 5.2" fill="none" stroke="#5db0f2" stroke-width="1.2"/></svg><span class="ui" style="left:30px;top:4px">天...</span></div>
    <div class="tk" style="left:291px;width:81px;"><svg style="left:11px;top:4px" width="17" height="16" viewBox="0 0 17 16"><path d="M4.5 .5 h8 l3.5 3.5 v11.5 h-11.5z" fill="#dde5fa" stroke="#7b8cba" stroke-width="1"/><path d="M12.5 .5 v3.5 h3.5z" fill="#f6f8ff" stroke="#7b8cba" stroke-width=".8"/><path d="M10.6 10.6 a4.1 4.1 0 1 1 .5-2.4 h-7" fill="none" stroke="#2277d6" stroke-width="2.3"/><path d="M1 11.5 C1.5 6 8 3 12 5.2" fill="none" stroke="#5db0f2" stroke-width="1.2"/></svg><span class="ui" style="left:30px;top:4px">腾...</span></div>
    <div class="tk" style="left:373px;width:81px;"><svg style="left:9px;top:5px" width="17" height="14" viewBox="0 0 17 14"><path d="M1 2 h5 l1.5 2 h8.5 v9 h-15z" fill="#f8d878" stroke="#c89828" stroke-width=".8"/><path d="M1 5.5 h15" stroke="#fff0b0" stroke-width="1"/></svg><span class="ui" style="left:30px;top:4px">v2.67</span></div>
    <div class="tk" style="left:455px;width:81px;"><svg style="left:11px;top:4px" width="17" height="16" viewBox="0 0 17 16"><path d="M4.5 .5 h8 l3.5 3.5 v11.5 h-11.5z" fill="#dde5fa" stroke="#7b8cba" stroke-width="1"/><path d="M12.5 .5 v3.5 h3.5z" fill="#f6f8ff" stroke="#7b8cba" stroke-width=".8"/><path d="M10.6 10.6 a4.1 4.1 0 1 1 .5-2.4 h-7" fill="none" stroke="#2277d6" stroke-width="2.3"/><path d="M1 11.5 C1.5 6 8 3 12 5.2" fill="none" stroke="#5db0f2" stroke-width="1.2"/></svg><span class="ui" style="left:30px;top:4px">天...</span></div>
    <div class="tk" style="left:537px;width:81px;"><svg style="left:9px;top:4px" width="17" height="17" viewBox="0 0 17 17"><circle cx="8.5" cy="8.5" r="7.6" fill="#8cc83a" stroke="#d8f0a0" stroke-width="1"/><circle cx="6.5" cy="6" r="3.2" fill="#d4f08a"/><path d="M6 12 a3 3 0 0 1 5-3" stroke="#fff" stroke-width="1.4" fill="none"/></svg><span class="ui" style="left:30px;top:4px">QQ...</span></div>
    <div class="tk" style="left:619px;width:81px;"><svg style="left:10px;top:4px" width="16" height="17" viewBox="0 0 16 17"><path d="M2 2 L6 15 L8 15 L5 2z" fill="#e84a2a"/><path d="M6 2 L8.5 15 L10 15 L9 2z" fill="#f4c428"/><path d="M10.5 2 L10 15 L12 15 L14 2z" fill="#4a8fe8"/><path d="M4 12 h8 v4 h-8z" fill="#b88a4a"/></svg><span class="ui" style="left:30px;top:4px">1.J...</span></div>
    <div class="tk" style="left:702px;width:81px;"><svg style="left:11px;top:4px" width="17" height="16" viewBox="0 0 17 16"><path d="M4.5 .5 h8 l3.5 3.5 v11.5 h-11.5z" fill="#dde5fa" stroke="#7b8cba" stroke-width="1"/><path d="M12.5 .5 v3.5 h3.5z" fill="#f6f8ff" stroke="#7b8cba" stroke-width=".8"/><path d="M10.6 10.6 a4.1 4.1 0 1 1 .5-2.4 h-7" fill="none" stroke="#2277d6" stroke-width="2.3"/><path d="M1 11.5 C1.5 6 8 3 12 5.2" fill="none" stroke="#5db0f2" stroke-width="1.2"/></svg><span class="ui" style="left:30px;top:4px">天...</span></div>
    <div class="tk" style="left:784px;width:81px;"><svg style="left:11px;top:4px" width="17" height="16" viewBox="0 0 17 16"><path d="M4.5 .5 h8 l3.5 3.5 v11.5 h-11.5z" fill="#dde5fa" stroke="#7b8cba" stroke-width="1"/><path d="M12.5 .5 v3.5 h3.5z" fill="#f6f8ff" stroke="#7b8cba" stroke-width=".8"/><path d="M10.6 10.6 a4.1 4.1 0 1 1 .5-2.4 h-7" fill="none" stroke="#2277d6" stroke-width="2.3"/><path d="M1 11.5 C1.5 6 8 3 12 5.2" fill="none" stroke="#5db0f2" stroke-width="1.2"/></svg><span class="ui" style="left:30px;top:4px">管...</span></div>
    <div style="left:876px;top:8px;width:16px;height:16px;background:#e8441c;border:1px solid #fff"><span class="ui" style="left:2px;top:-2px;color:#fff;font-weight:bold;font-size:14px">S</span></div>
    <div style="left:911px;top:0;width:113px;height:30px;background:linear-gradient(#1290e8 0,#3ab4f8 7%,#169ef0 17%,#0f8ee8 50%,#1192ea 85%,#0b72c8 100%);border-left:1px solid #0a5cb8;box-shadow:inset 1px 0 0 #3ab0f4"></div>
    <div style="left:903px;top:6px;width:18px;height:18px;border-radius:50%;background:radial-gradient(circle at 40% 35%,#5ab4f8,#1a6ad8 70%);border:1px solid #8ac8fa"><svg style="left:4px;top:3px" width="8" height="10" viewBox="0 0 8 10"><path d="M6 1 L2 5 L6 9" stroke="#fff" stroke-width="2" fill="none"/></svg></div>
    <svg style="left:922px;top:6px" width="17" height="17" viewBox="0 0 17 17"><circle cx="8.5" cy="8.5" r="7.6" fill="#8cc83a" stroke="#d8f0a0" stroke-width="1"/><circle cx="6.5" cy="6" r="3.2" fill="#d4f08a"/><path d="M6 12 a3 3 0 0 1 5-3" stroke="#fff" stroke-width="1.4" fill="none"/></svg>
    <svg style="left:940px;top:6px" width="16" height="17" viewBox="0 0 16 17"><rect x="5" y="1" width="10" height="8" fill="#3a3a6a" stroke="#c8d0e8" stroke-width="1"/><rect x="1" y="6" width="10" height="8" fill="#4a4a7a" stroke="#c8d0e8" stroke-width="1"/><rect x="3" y="15" width="6" height="1.5" fill="#c8d0e8"/></svg>
    <svg style="left:958px;top:5px" width="17" height="19" viewBox="0 0 17 19"><path d="M8.5 1 L16 3.5 C16 10 13.5 15 8.5 18 C3.5 15 1 10 1 3.5z" fill="#2a9a3a" stroke="#d8f0d8" stroke-width="1.2"/><path d="M10 4.5 L5.5 10 h3 L7 14.5 L12 8.5 h-3z" fill="#fff"/></svg>
    <span class="ui" style="left:983px;top:7px;color:#fff;font-size:12px;letter-spacing:.6px">8:14</span>
  </div>
</div>
</body>
</html>
